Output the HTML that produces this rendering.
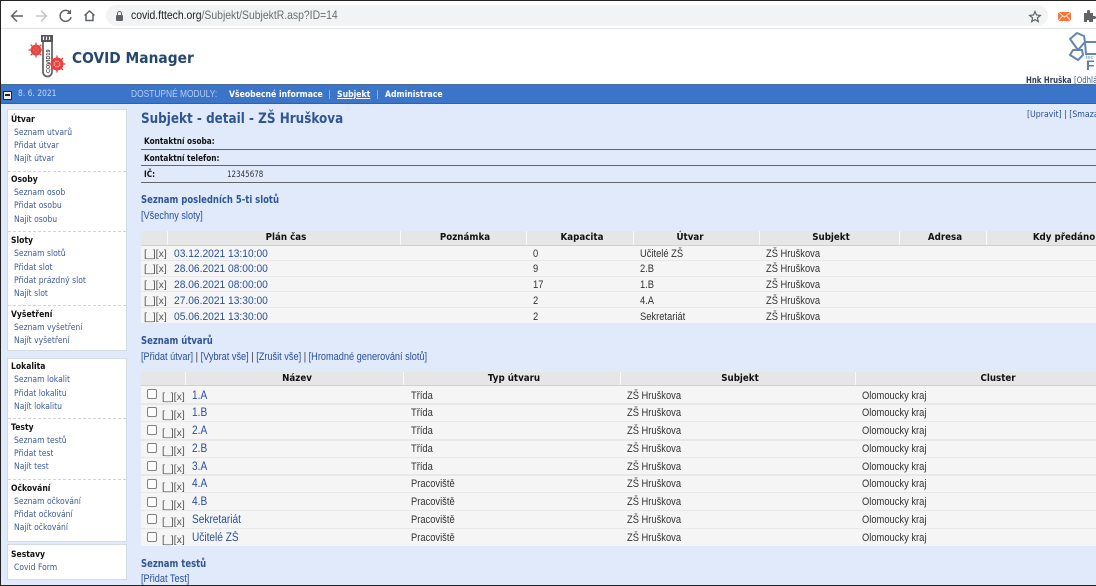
<!DOCTYPE html>
<html lang="cs"><head><meta charset="utf-8"><title>COVID Manager</title>
<style>
html,body{margin:0;padding:0}
body{width:1096px;height:586px;overflow:hidden;position:relative;background:#e1eafb;font-family:"Liberation Sans",sans-serif}
#w{position:absolute;left:0;top:0;width:1096px;height:586px;overflow:hidden;filter:blur(.25px)}
.b{position:absolute}
.t{position:absolute;white-space:nowrap;line-height:12px;height:12px;transform-origin:left center;margin-top:1px}
.s{font:9px/12px "DejaVu Sans",sans-serif;color:#3a5a9c;transform:scaleX(.85)}
.h{font:bold 9px/12px "DejaVu Sans",sans-serif;color:#111;transform:scaleX(.85)}
.c{font:bold 10px/12px "DejaVu Sans",sans-serif;color:#111;transform:translateX(-50%) scaleX(.87);transform-origin:center center}
.d{font:11px/12px "Liberation Sans",sans-serif;color:#333;transform:scaleX(.85)}
.l{font:11px/12px "Liberation Sans",sans-serif;color:#274f9e;transform:scaleX(.835)}
.dt{font:11px/12px "Liberation Sans",sans-serif;color:#274f9e;transform:scaleX(.93)}
.k{font:11.500px/12px "Liberation Sans",sans-serif;color:#274f9e;transform:scaleX(.88)}
.m{font:10.500px/12px "Liberation Sans",sans-serif;color:#555}
.g{font:bold 11px/12px "DejaVu Sans",sans-serif;color:#2f5597;transform:scaleX(.77)}
.n{font:bold 8.500px/12px "DejaVu Sans",sans-serif;color:#111;transform:scaleX(.865)}
.u{font:bold 9px/12px "DejaVu Sans",sans-serif;color:#fff;transform:scaleX(.86)}
.dash{position:absolute;left:8px;width:118px;height:0;border-top:1px dashed #d4d4d4}
.box{position:absolute;left:7px;width:118px;background:#fff;border:1px solid #d5dbe5}
.cb{position:absolute;left:147px;width:8px;height:8px;border:1px solid #808080;border-radius:2px;background:#fff}
</style></head><body><div id="w">
<!-- browser chrome -->
<div class="b" style="left:0;top:0;width:1096px;height:84px;background:#fff"></div>
<div class="b" style="left:106px;top:5px;width:942px;height:21px;background:#f1f3f4;border-radius:11px"></div>
<div class="b" style="left:0;top:28px;width:1096px;height:1px;background:#e2e3e5"></div>
<svg class="b" style="left:0;top:0" width="130" height="28" fill="none" stroke-width="1.5">
<path d="M23 16H12M17 10.500L11.500 16L17 21.500" stroke="#5f6368"/>
<path d="M36 16H46M41 10.500L46.500 16L41 21.500" stroke="#c4c7ca"/>
<path d="M70 12.500A5.500 5.500 0 1 0 71 17" stroke="#5f6368"/><path d="M71 9.500V14H66.500Z" fill="#5f6368"/>
<path d="M84.500 15.500L89.500 11L94.500 15.500M86 14.500V20.500H93V14.500" stroke="#5f6368"/>
<rect x="116" y="15" width="7" height="6" rx="1" fill="#5f6368"/><path d="M117.500 15V13.500A2 2 0 0 1 121.500 13.500V15" stroke="#5f6368" stroke-width="1"/>
</svg>
<div class="t" style="left:131px;top:9px;font-size:11.700px;color:#6a6d71;transform:scaleX(.89)"><span style="color:#202124">covid.fttech.org</span>/Subjekt/SubjektR.asp?ID=14</div>
<svg class="b" style="left:1025px;top:5px" width="71" height="22">
<path d="M10 6.500L11.500 10L15.300 10.400L12.400 12.900L13.300 16.600L10 14.600L6.700 16.600L7.600 12.900L4.700 10.400L8.500 10Z" fill="none" stroke="#5f6368" stroke-width="1.200"/>
<rect x="33" y="7" width="13" height="9" fill="#f9743a"/><path d="M33 7L39.500 12L46 7M33 16L37.500 11M46 16L41.500 11" fill="none" stroke="#fde0cc" stroke-width="1"/>
<path d="M59 8H62V6.500A1.500 1.500 0 0 1 65 6.500V8H68V11H69.500A1.500 1.500 0 0 1 69.500 14H68V17H64V15.500A1.500 1.500 0 0 0 62 15.500V17H59Z" fill="#5f6368"/>
</svg>
<!-- header -->
<svg class="b" style="left:28px;top:33px" width="40" height="46">
<rect x="13" y="2" width="12" height="7" fill="#555"/><path d="M15.500 3.500V7M18.500 3.500V7M21.500 3.500V7" stroke="#fff" stroke-width="1.200"/>
<path d="M15 9V39A4.500 4.500 0 0 0 24 39V9" fill="#fff" stroke="#666" stroke-width="1.800"/>
<text x="-40" y="22" transform="rotate(-90)" font-family="Liberation Sans,sans-serif" font-size="5.500" font-weight="bold" fill="#444">COVID19</text>
<g fill="none" stroke="#e8403c"><circle cx="8" cy="17" r="4" stroke-width="2.800"/><path d="M8 9.500V24.500M0.500 17H15.500M2.700 11.700L13.300 22.300M13.300 11.700L2.700 22.300" stroke-width="1.300"/></g>
<g fill="none" stroke="#e8403c"><circle cx="29" cy="31" r="5" stroke-width="3"/><path d="M29 22.500V39.500M20.500 31H37.500M23 25L35 37M35 25L23 37" stroke-width="1.300"/></g>
</svg>
<div class="t" style="left:72px;top:49px;height:16px;font:bold 15.500px/16px 'DejaVu Sans',sans-serif;color:#26486f;transform:scaleX(.89)">COVID Manager</div>
<svg class="b" style="left:1066px;top:30px" width="30" height="42" fill="none" stroke="#6485b2" stroke-width="2" stroke-linejoin="round">
<path d="M11 3L18 6L19 12L12 20L4 9Z"/>
<path d="M19 12H33V24H20Z"/>
<path d="M7 20H16L17 25L12 30L4 25Z"/>
<text x="20" y="29" font-family="Liberation Sans,sans-serif" font-size="5.500" fill="#6d8db5" stroke="none">tec</text>
<text x="20" y="40" font-family="Liberation Sans,sans-serif" font-size="14" font-weight="bold" fill="#5b7faf" stroke="none">F</text>
</svg>
<div class="t" style="left:1026px;top:74px;font:bold 8.500px/12px 'DejaVu Sans',sans-serif;color:#2e3f58;transform:scaleX(.82)">Hnk Hruška <span style="font-weight:normal;color:#3a5a9c">[Odhlásit]</span></div>
<!-- blue bar -->
<div class="b" style="left:0;top:84px;width:1096px;height:20px;background:#3b75c9;border-top:1px solid #4a6a9a;border-bottom:1px solid #2f62ad;box-sizing:border-box"></div>
<div class="b" style="left:3px;top:91px;width:7px;height:7px;background:#eee;border:1px solid #223"></div>
<div class="b" style="left:5px;top:94px;width:5px;height:2px;background:#222"></div>
<div class="t" style="left:18px;top:87px;font:8.500px/12px 'DejaVu Sans',sans-serif;color:#c4d6f2;transform:scaleX(.89)">8. 6. 2021</div>
<div class="t" style="left:131px;top:88px;font:10px/12px 'Liberation Sans',sans-serif;color:#b4cdf0;transform:scaleX(.84)">DOSTUPNÉ MODULY:</div>
<div class="t u" style="left:229px;top:88px">Všeobecné informace</div>
<div class="t u" style="left:337px;top:88px;text-decoration:underline">Subjekt</div>
<div class="t u" style="left:385px;top:88px">Administrace</div>
<div class="b" style="left:329px;top:90px;width:1px;height:9px;background:#8fb0e0"></div>
<div class="b" style="left:377px;top:90px;width:1px;height:9px;background:#8fb0e0"></div>
<!-- sidebar -->
<div class="box" style="top:109px;height:240px"></div>
<div class="box" style="top:358px;height:182px"></div>
<div class="box" style="top:544px;height:34px"></div>
<div class="dash" style="top:171px"></div><div class="dash" style="top:231px"></div><div class="dash" style="top:305px"></div>
<div class="dash" style="top:418px"></div><div class="dash" style="top:479px"></div>
<div class="t h" style="left:11px;top:113px">Útvar</div>
<div class="t s" style="left:14px;top:126px">Seznam utvarů</div>
<div class="t s" style="left:14px;top:139px">Přidat útvar</div>
<div class="t s" style="left:14px;top:152px">Najít útvar</div>
<div class="t h" style="left:11px;top:173px">Osoby</div>
<div class="t s" style="left:14px;top:186px">Seznam osob</div>
<div class="t s" style="left:14px;top:199px">Přidat osobu</div>
<div class="t s" style="left:14px;top:213px">Najít osobu</div>
<div class="t h" style="left:11px;top:234px">Sloty</div>
<div class="t s" style="left:14px;top:247px">Seznam slotů</div>
<div class="t s" style="left:14px;top:261px">Přidat slot</div>
<div class="t s" style="left:14px;top:274px">Přidat prázdný slot</div>
<div class="t s" style="left:14px;top:287px">Najít slot</div>
<div class="t h" style="left:11px;top:308px">Vyšetření</div>
<div class="t s" style="left:14px;top:321px">Seznam vyšetření</div>
<div class="t s" style="left:14px;top:334px">Najít vyšetření</div>
<div class="t h" style="left:11px;top:360px">Lokalita</div>
<div class="t s" style="left:14px;top:373px">Seznam lokalit</div>
<div class="t s" style="left:14px;top:387px">Přidat lokalitu</div>
<div class="t s" style="left:14px;top:400px">Najít lokalitu</div>
<div class="t h" style="left:11px;top:421px">Testy</div>
<div class="t s" style="left:14px;top:434px">Seznam testů</div>
<div class="t s" style="left:14px;top:447px">Přidat test</div>
<div class="t s" style="left:14px;top:460px">Najít test</div>
<div class="t h" style="left:11px;top:482px">Očkování</div>
<div class="t s" style="left:14px;top:495px">Seznam očkování</div>
<div class="t s" style="left:14px;top:508px">Přidat očkování</div>
<div class="t s" style="left:14px;top:521px">Najít očkování</div>
<div class="t h" style="left:11px;top:548px">Sestavy</div>
<div class="t s" style="left:14px;top:561px">Covid Form</div>
<!-- content top -->
<div class="t" style="left:141px;top:110px;height:16px;font:bold 14px/16px 'DejaVu Sans',sans-serif;color:#2f5597;transform:scaleX(.857)">Subjekt - detail - ZŠ Hruškova</div>
<div class="t" style="left:1027px;top:108px;font:8.500px/12px 'DejaVu Sans',sans-serif;color:#274f9e;transform:scaleX(.92)">[Upravit] <span style="color:#333">|</span> [Smazat]</div>
<div class="t n" style="left:144px;top:135px">Kontaktní osoba:</div>
<div class="b" style="left:141px;top:149px;width:955px;height:1px;background:#666"></div>
<div class="t n" style="left:144px;top:152px">Kontaktní telefon:</div>
<div class="b" style="left:141px;top:165px;width:955px;height:1px;background:#666"></div>
<div class="t n" style="left:144px;top:168px">IČ:</div>
<div class="t" style="left:227px;top:168px;font:8.500px/12px 'DejaVu Sans',sans-serif;color:#333;transform:scaleX(.84)">12345678</div>
<div class="b" style="left:141px;top:182px;width:955px;height:1px;background:#666"></div>
<div class="t g" style="left:141px;top:193px">Seznam posledních 5-ti slotů</div>
<div class="t l" style="left:141px;top:209px">[Všechny sloty]</div>
<!-- table 1 -->
<div class="b" style="left:141px;top:231px;width:955px;height:14px;background:#e6e6e6;border-bottom:1px solid #d0d0d0"></div>
<div class="b" style="left:167px;top:231px;width:1px;height:14px;background:#fafafa"></div>
<div class="b" style="left:400px;top:231px;width:1px;height:14px;background:#fafafa"></div>
<div class="b" style="left:526px;top:231px;width:1px;height:14px;background:#fafafa"></div>
<div class="b" style="left:633px;top:231px;width:1px;height:14px;background:#fafafa"></div>
<div class="b" style="left:759px;top:231px;width:1px;height:14px;background:#fafafa"></div>
<div class="b" style="left:899px;top:231px;width:1px;height:14px;background:#fafafa"></div>
<div class="b" style="left:986px;top:231px;width:1px;height:14px;background:#fafafa"></div>
<div class="b" style="left:141px;top:246px;width:955px;height:77px;background:#f5f5f5"></div>
<div class="b" style="left:141px;top:260px;width:955px;height:1px;background:#e8e8e8"></div>
<div class="b" style="left:141px;top:276px;width:955px;height:1px;background:#e8e8e8"></div>
<div class="b" style="left:141px;top:291px;width:955px;height:1px;background:#e8e8e8"></div>
<div class="b" style="left:141px;top:307px;width:955px;height:1px;background:#e8e8e8"></div>
<div class="t c" style="left:286px;top:231px">Plán čas</div>
<div class="t c" style="left:465px;top:231px">Poznámka</div>
<div class="t c" style="left:582px;top:231px">Kapacita</div>
<div class="t c" style="left:690px;top:231px">Útvar</div>
<div class="t c" style="left:831px;top:231px">Subjekt</div>
<div class="t c" style="left:945px;top:231px">Adresa</div>
<div class="t c" style="left:1064px;top:231px">Kdy předáno</div>
<div class="t m" style="left:144px;top:247px">[_][x]</div><div class="t dt" style="left:174px;top:247px">03.12.2021 13:10:00</div><div class="t d" style="left:533px;top:247px">0</div><div class="t d" style="left:640px;top:247px">Učitelé ZŠ</div><div class="t d" style="left:766px;top:247px">ZŠ Hruškova</div>
<div class="t m" style="left:144px;top:262px">[_][x]</div><div class="t dt" style="left:174px;top:262px">28.06.2021 08:00:00</div><div class="t d" style="left:533px;top:262px">9</div><div class="t d" style="left:640px;top:262px">2.B</div><div class="t d" style="left:766px;top:262px">ZŠ Hruškova</div>
<div class="t m" style="left:144px;top:278px">[_][x]</div><div class="t dt" style="left:174px;top:278px">28.06.2021 08:00:00</div><div class="t d" style="left:533px;top:278px">17</div><div class="t d" style="left:640px;top:278px">1.B</div><div class="t d" style="left:766px;top:278px">ZŠ Hruškova</div>
<div class="t m" style="left:144px;top:294px">[_][x]</div><div class="t dt" style="left:174px;top:294px">27.06.2021 13:30:00</div><div class="t d" style="left:533px;top:294px">2</div><div class="t d" style="left:640px;top:294px">4.A</div><div class="t d" style="left:766px;top:294px">ZŠ Hruškova</div>
<div class="t m" style="left:144px;top:310px">[_][x]</div><div class="t dt" style="left:174px;top:310px">05.06.2021 13:30:00</div><div class="t d" style="left:533px;top:310px">2</div><div class="t d" style="left:640px;top:310px">Sekretariát</div><div class="t d" style="left:766px;top:310px">ZŠ Hruškova</div>
<!-- section 2 -->
<div class="t g" style="left:141px;top:334px">Seznam útvarů</div>
<div class="t l" style="left:141px;top:350px">[Přidat útvar] <span style="color:#333">|</span> [Vybrat vše] <span style="color:#333">|</span> [Zrušit vše] <span style="color:#333">|</span> [Hromadné generování slotů]</div>
<div class="b" style="left:141px;top:372px;width:955px;height:13px;background:#e6e6e6;border-bottom:1px solid #d0d0d0"></div>
<div class="b" style="left:185px;top:372px;width:1px;height:13px;background:#fafafa"></div>
<div class="b" style="left:403px;top:372px;width:1px;height:13px;background:#fafafa"></div>
<div class="b" style="left:620px;top:372px;width:1px;height:13px;background:#fafafa"></div>
<div class="b" style="left:855px;top:372px;width:1px;height:13px;background:#fafafa"></div>
<div class="b" style="left:141px;top:386px;width:955px;height:160px;background:#f5f5f5"></div>
<div class="b" style="left:141px;top:403px;width:955px;height:2px;background:#e8e8e8"></div>
<div class="b" style="left:141px;top:421px;width:955px;height:1px;background:#e8e8e8"></div>
<div class="b" style="left:141px;top:439px;width:955px;height:2px;background:#e8e8e8"></div>
<div class="b" style="left:141px;top:457px;width:955px;height:1px;background:#e8e8e8"></div>
<div class="b" style="left:141px;top:474px;width:955px;height:2px;background:#e8e8e8"></div>
<div class="b" style="left:141px;top:492px;width:955px;height:1px;background:#e8e8e8"></div>
<div class="b" style="left:141px;top:510px;width:955px;height:1px;background:#e8e8e8"></div>
<div class="b" style="left:141px;top:528px;width:955px;height:1px;background:#e8e8e8"></div>
<div class="t c" style="left:297px;top:372px">Název</div>
<div class="t c" style="left:514px;top:372px">Typ útvaru</div>
<div class="t c" style="left:740px;top:372px">Subjekt</div>
<div class="t c" style="left:998px;top:372px">Cluster</div>
<div class="cb" style="top:389px"></div><div class="t m" style="left:162px;top:390px">[_][x]</div><div class="t k" style="left:192px;top:389px">1.A</div><div class="t d" style="left:411px;top:389px">Třída</div><div class="t d" style="left:627px;top:389px">ZŠ Hruškova</div><div class="t d" style="left:862px;top:389px">Olomoucky kraj</div>
<div class="cb" style="top:407px"></div><div class="t m" style="left:162px;top:408px">[_][x]</div><div class="t k" style="left:192px;top:406px">1.B</div><div class="t d" style="left:411px;top:406px">Třída</div><div class="t d" style="left:627px;top:406px">ZŠ Hruškova</div><div class="t d" style="left:862px;top:406px">Olomoucky kraj</div>
<div class="cb" style="top:425px"></div><div class="t m" style="left:162px;top:426px">[_][x]</div><div class="t k" style="left:192px;top:424px">2.A</div><div class="t d" style="left:411px;top:424px">Třída</div><div class="t d" style="left:627px;top:424px">ZŠ Hruškova</div><div class="t d" style="left:862px;top:424px">Olomoucky kraj</div>
<div class="cb" style="top:443px"></div><div class="t m" style="left:162px;top:444px">[_][x]</div><div class="t k" style="left:192px;top:442px">2.B</div><div class="t d" style="left:411px;top:442px">Třída</div><div class="t d" style="left:627px;top:442px">ZŠ Hruškova</div><div class="t d" style="left:862px;top:442px">Olomoucky kraj</div>
<div class="cb" style="top:461px"></div><div class="t m" style="left:162px;top:462px">[_][x]</div><div class="t k" style="left:192px;top:460px">3.A</div><div class="t d" style="left:411px;top:460px">Třída</div><div class="t d" style="left:627px;top:460px">ZŠ Hruškova</div><div class="t d" style="left:862px;top:460px">Olomoucky kraj</div>
<div class="cb" style="top:479px"></div><div class="t m" style="left:162px;top:480px">[_][x]</div><div class="t k" style="left:192px;top:477px">4.A</div><div class="t d" style="left:411px;top:477px">Pracoviště</div><div class="t d" style="left:627px;top:477px">ZŠ Hruškova</div><div class="t d" style="left:862px;top:477px">Olomoucky kraj</div>
<div class="cb" style="top:497px"></div><div class="t m" style="left:162px;top:498px">[_][x]</div><div class="t k" style="left:192px;top:495px">4.B</div><div class="t d" style="left:411px;top:495px">Pracoviště</div><div class="t d" style="left:627px;top:495px">ZŠ Hruškova</div><div class="t d" style="left:862px;top:495px">Olomoucky kraj</div>
<div class="cb" style="top:514px"></div><div class="t m" style="left:162px;top:515px">[_][x]</div><div class="t k" style="left:192px;top:513px">Sekretariát</div><div class="t d" style="left:411px;top:513px">Pracoviště</div><div class="t d" style="left:627px;top:513px">ZŠ Hruškova</div><div class="t d" style="left:862px;top:513px">Olomoucky kraj</div>
<div class="cb" style="top:532px"></div><div class="t m" style="left:162px;top:533px">[_][x]</div><div class="t k" style="left:192px;top:531px">Učitelé ZŠ</div><div class="t d" style="left:411px;top:531px">Pracoviště</div><div class="t d" style="left:627px;top:531px">ZŠ Hruškova</div><div class="t d" style="left:862px;top:531px">Olomoucky kraj</div>
<!-- section 3 -->
<div class="t g" style="left:141px;top:557px">Seznam testů</div>
<div class="t l" style="left:141px;top:572px">[Přidat Test]</div>
</div>
<!-- screenshot frame -->
<div style="position:absolute;left:0;top:0;width:1096px;height:1px;background:#222"></div>
<div style="position:absolute;left:0;top:0;width:1px;height:586px;background:#222"></div>
<div style="position:absolute;left:0;top:585px;width:1096px;height:1px;background:#222"></div>
</body></html>
